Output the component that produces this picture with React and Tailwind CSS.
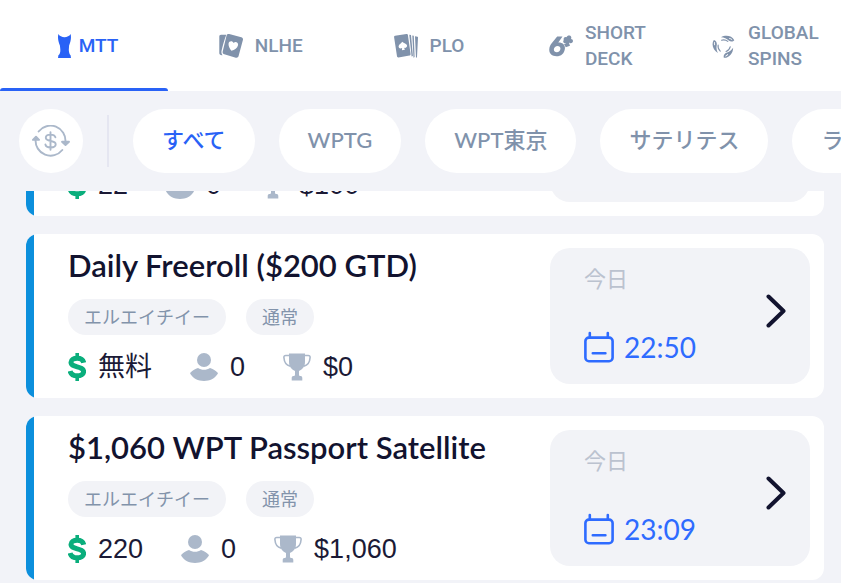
import React, { useLayoutEffect, useRef, useState } from "react";

function CupIcon() {
  return (
    <svg viewBox="0 0 13 24" className="h-6 w-[13px]" fill="currentColor" aria-hidden="true">
      <path d="M.4 0C2.600 4.200 10.400 4.200 12.600 0c1 4-.1 7.600-1.500 11.500L10.800 16c.2 2.600.7 4.400 1.800 5.200L13 24H0l.4-2.800C2 20 2.500 18 2.300 15l-.4-3.500C.4 7.600-.6 4 .4 0Z" />
    </svg>
  );
}

function HeartCardsIcon() {
  return (
    <svg viewBox="0 0 24 24" className="size-6" fill="currentColor" aria-hidden="true">
      <path d="M2 .8 7.300.7C5.300 6 3.500 12 2.500 17c-.3 1.600.1 2.700 1 4.200C1.500 21.500.3 20.500.3 19V2.500C.3 1.500.9.800 2 .800Z" />
      <path
        fillRule="evenodd"
        d="M10.200 0 22.300 3.300c1.300.4 2 1.500 1.600 2.800l-4.300 16c-.4 1.300-1.500 2-2.800 1.600L5.300 20.300c-1.300-.4-1.900-1.400-1.600-2.700L7.500 1.700C7.900.4 8.900-.4 10.200 0Zm2.200 16.800c3.300-.8 6-2.800 6.600-5.600.6-3-2.700-4.400-4.400-2.100-.9-2.700-4.700-2.500-5 .5-.3 2.600 1 4.900 2.800 7.200Z"
      />
    </svg>
  );
}

function SpadeCardsIcon() {
  return (
    <svg viewBox="0 0 24 24" className="size-6" fill="currentColor" aria-hidden="true">
      <path
        fillRule="evenodd"
        d="M1 1.700 12.500 0c.8 0 1.300.3 1.400 1.100L16.600 20c.1.900-.3 1.500-1.100 1.600L4.500 23.400c-.8.1-1.400-.3-1.500-1.100L.1 3.200C0 2.300.3 1.800 1 1.700Zm7.200 6.100c-1 1.700-3.500 2.600-3.600 4.700 0 1.900 2 2.500 3.500 1.500l-.2 2.200 3-.4-.8-2c1.800.4 3.400-.8 2.900-2.500-.5-1.800-3.100-2-4.800-3.500Z"
      />
      <path d="m15.300.8 1.700.3 1.900 21-1.300.4ZM18.300 1.500l1.500.3.800 21.300-1.100.7ZM21 2.200l2.500.6c.4.100.5.400.5.800l-1 19.400-1 .9Z" />
    </svg>
  );
}

function SixPlusIcon() {
  return (
    <svg viewBox="0 0 24 22" className="h-[22px] w-6" fill="currentColor" aria-hidden="true">
      <path
        fillRule="evenodd"
        d="M8.200 1.500h5.300L9.300 7.400c4.200-.2 7 2.300 6.600 6.300-.4 4.500-3.800 7.600-8.400 7.600-4.800 0-7.700-3-7.200-7.400C.7 9.500 4.300 6.500 8.200 1.500Zm.4 9.400c-2 0-3.500 1.300-3.700 3.200-.2 1.900 1 3.100 2.900 3.100 2 0 3.400-1.300 3.600-3.200.2-1.800-.9-3.100-2.800-3.100Z"
      />
      <path d="M14.800 5.100c-.8-2 1-3.600 2.800-2.800.5-2.200 3.900-2.400 4.600-.3.300 1 .1 1.500-.3 2.100 1.900-.1 2.700 2 1.500 3.300-1 1-2.500.9-3.500.1.400 1.400.7 2.300 1.100 3.200l-4.300 1.600c-.5-1.300-1-2.300-1.800-3.200 1.200 0 1.800-.2 2.200-.9-1.900.8-3.900-1.200-2.300-3.100Z" />
    </svg>
  );
}

function SpinsIcon() {
  const arms = [0, 120, 240];
  return (
    <svg viewBox="0 0 24 24" className="size-6" fill="none" aria-hidden="true">
      {arms.map((angle) => (
        <g key={angle} transform={`rotate(${angle} 12 12)`}>
          <path d="M9 3.200C13.500.5 20 1.500 22.300 6.200c-1.300 1.700-4 1.500-5.600.2C14.600 4.500 12.300 3.400 9 3.200Z" fill="currentColor" />
          <path d="M9.500 6.200c2.700-.8 4.600-.2 6.300 1.200" stroke="currentColor" strokeWidth="1.100" strokeLinecap="round" />
          <path d="M17.600 4.500c.9.100 1.600.4 2.300 1" stroke="white" strokeWidth=".9" strokeLinecap="round" />
        </g>
      ))}
    </svg>
  );
}

function CurrencyIcon() {
  return (
    <svg
      viewBox="0 0 38 32"
      className="h-8 w-[38px]"
      fill="none"
      stroke="currentColor"
      strokeWidth="1.900"
      strokeLinecap="round"
      strokeLinejoin="round"
      aria-hidden="true"
    >
      <path d="M6.600 6.500A15 15 0 0 1 33.400 17" />
      <path d="M3.600 14.500A15 15 0 0 0 30.300 25" />
      <path d="M30 16.800h7l-3.500 3.200ZM.9 14.800h6.200L4 11.700Z" fill="currentColor" />
      <path d="M18.500 7.300v17.500M23.400 12.300c-.5-1.800-2.200-2.700-4.900-2.700-2.900 0-4.700 1.100-4.700 3.200 0 4.600 9.900 1.900 9.900 6.500 0 2.100-2 3.200-5 3.200-3.100 0-4.900-1.100-5.300-3" />
    </svg>
  );
}

function DollarIcon() {
  return (
    <svg viewBox="0 0 18 28" className="h-7 w-[18px] text-[#0aae7c]" fill="none" stroke="currentColor" aria-hidden="true">
      <path
        d="M15.700 9.700C15 6.700 12.500 5.300 9.200 5.300c-3.700 0-6.200 1.500-6.200 4 0 5.800 12.600 3.200 12.600 9.200 0 2.700-2.700 4.300-6.400 4.300-3.900 0-6.400-1.600-7.100-4.800"
        strokeWidth="5"
      />
      <path d="M9.200 0v5M9.200 23v5" strokeWidth="3.600" />
    </svg>
  );
}

function PlayerIcon() {
  return (
    <svg viewBox="0 0 28 28" className="size-7 text-[#abb8ca]" fill="currentColor" aria-hidden="true">
      <circle cx="14" cy="7" r="7" />
      <path d="M.5 19.500C2.700 17.200 5.300 15.600 8 14.900c3.300 2.400 8.700 2.400 12 0 2.700.7 5.300 2.300 7.500 4.600.5.600.5 1 .1 1.600C24.700 25.600 20 28 14 28S3.300 25.600.4 21.100c-.4-.6-.4-1 .1-1.600Z" />
    </svg>
  );
}

function TrophyIcon() {
  return (
    <svg viewBox="0 0 28 28" className="size-7 text-[#abb8ca]" fill="currentColor" aria-hidden="true">
      <path d="M6 .5h16v8.300c0 4.900-2.300 7.500-6 9.200v3.500c0 1 .6 1.500 1.600 1.600 1.100.1 1.700.8 1.700 1.900v2.500H8.700V25c0-1.100.6-1.800 1.700-1.900 1-.1 1.600-.6 1.600-1.600V18c-3.700-1.700-6-4.300-6-9.200Z" />
      <path
        d="M6 2.500H2.800C1.500 2.500.8 3.200.9 4.500c.3 4.700 2.200 7.800 6.300 8.600M22 2.500h3.200c1.300 0 2 .7 1.900 2-.3 4.700-2.200 7.800-6.300 8.600"
        fill="none"
        stroke="currentColor"
        strokeWidth="1.600"
      />
    </svg>
  );
}

function CalendarIcon() {
  return (
    <svg
      viewBox="0 0 30 32"
      className="h-8 w-[30px]"
      fill="none"
      stroke="currentColor"
      strokeWidth="2.600"
      strokeLinecap="round"
      aria-hidden="true"
    >
      <rect x="1.400" y="6.600" width="27.200" height="23.600" rx="3.500" />
      <path d="M5.800 6V2M23.800 6V2M8.800 22.200h12.600" />
    </svg>
  );
}

function ChevronIcon() {
  return (
    <svg
      viewBox="0 0 20 34"
      className="h-[34px] w-5 text-[#12132f]"
      fill="none"
      stroke="currentColor"
      strokeWidth="4"
      strokeLinecap="round"
      strokeLinejoin="round"
      aria-hidden="true"
    >
      <path d="m2.500 2.500 15 14.500-15 14.500" />
    </svg>
  );
}

const tabs = [
  { id: "mtt", label: "MTT", icon: CupIcon },
  { id: "nlhe", label: "NLHE", icon: HeartCardsIcon },
  { id: "plo", label: "PLO", icon: SpadeCardsIcon },
  { id: "short", label: "SHORT DECK", icon: SixPlusIcon },
  { id: "spins", label: "GLOBAL SPINS", icon: SpinsIcon },
];

const filters = ["すべて", "WPTG", "WPT東京", "サテリテス", "ラ"];

const tournaments = [
  { id: 1, fee: "22", players: 0, prize: "$100" },
  {
    id: 2,
    title: "Daily Freeroll ($200 GTD)",
    tags: ["エルエイチイー", "通常"],
    fee: "無料",
    players: 0,
    prize: "$0",
    day: "今日",
    time: "22:50",
  },
  {
    id: 3,
    title: "$1,060 WPT Passport Satellite",
    tags: ["エルエイチイー", "通常"],
    fee: "220",
    players: 0,
    prize: "$1,060",
    day: "今日",
    time: "23:09",
  },
];

function Stat({ icon: Icon, children }) {
  return (
    <span className="flex items-center gap-3">
      <Icon />
      {children}
    </span>
  );
}

function TournamentCard({ title, tags, fee, players, prize, day, time }) {
  return (
    <article className="flex min-h-[164px] shrink-0 overflow-hidden rounded-xl bg-white">
      <div className="w-2 shrink-0 bg-[#0c8fdc]" />

      <div className="flex min-w-0 flex-1 flex-col justify-end gap-3 pt-3 pb-[11px] pl-[34px]">
        {title && (
          <h2 className="mb-1 text-[31px] leading-9 font-semibold whitespace-nowrap text-[#12132f]">{title}</h2>
        )}
        {tags && (
          <div className="flex gap-5">
            {tags.map((tag) => (
              <span
                key={tag}
                className="flex h-9 items-center rounded-full bg-[#f2f3f7] px-4 text-lg text-[#8293ab]"
              >
                {tag}
              </span>
            ))}
          </div>
        )}
        <div className="flex h-10 items-center gap-[38px] font-['Liberation_Sans','Noto_Sans_CJK_JP',sans-serif] text-[27px] leading-10 text-[#1b1a36]">
          <Stat icon={DollarIcon}>{fee}</Stat>
          <Stat icon={PlayerIcon}>{players}</Stat>
          <Stat icon={TrophyIcon}>{prize}</Stat>
        </div>
      </div>

      <div className="my-3.5 mr-3.5 flex w-[260px] shrink-0 items-center justify-between rounded-[20px] bg-[#f2f3f7] pr-6 pb-2.5 pl-[34px]">
        {time && (
          <>
            <div className="flex flex-col gap-9 pt-1">
              <span className="text-[22px] leading-8 text-[#bbc2cf]">{day}</span>
              <span className="flex items-center gap-2.5 text-[28px] leading-8 text-[#2e6bff]">
                <CalendarIcon />
                {time}
              </span>
            </div>
            <button type="button" aria-label={title}>
              <ChevronIcon />
            </button>
          </>
        )}
      </div>
    </article>
  );
}

export default function App() {
  const [activeTab, setActiveTab] = useState("mtt");
  const [activeFilter, setActiveFilter] = useState("すべて");
  const listRef = useRef(null);

  useLayoutEffect(() => {
    listRef.current.scrollTop = 139;
  }, []);

  return (
    <div className="flex h-screen flex-col overflow-hidden bg-[#f2f3f8] font-['Lato','Noto_Sans_CJK_JP',sans-serif]">
      {/* Game tabs */}
      <nav className="grid shrink-0 grid-cols-5 bg-white font-['Roboto',sans-serif]">
        {tabs.map(({ id, label, icon: Icon }) => {
          const isActive = id === activeTab;
          return (
            <button
              key={id}
              type="button"
              onClick={() => setActiveTab(id)}
              className={`flex h-[91px] flex-col text-[19px] leading-[26px] font-medium ${
                isActive ? "text-[#2962f6]" : "text-[#8092ab]"
              }`}
            >
              <span
                className={`flex w-full flex-1 items-center justify-center pt-[3px] text-left ${
                  isActive ? "gap-2 pl-2" : "gap-3 pl-[17px]"
                }`}
              >
                <Icon />
                <span className={label.includes(" ") ? "w-min" : ""}>{label}</span>
              </span>
              <span className={`h-[3px] w-full shrink-0 rounded-t ${isActive ? "bg-[#2962f6]" : ""}`} />
            </button>
          );
        })}
      </nav>

      {/* Filters */}
      <div className="flex h-[100px] shrink-0 items-center gap-6 overflow-hidden pl-[19px]">
        <button
          type="button"
          aria-label="$"
          className="flex size-16 shrink-0 items-center justify-center rounded-full bg-white text-[#abb8ca]"
        >
          <CurrencyIcon />
        </button>
        <div className="h-13 w-0.5 shrink-0 bg-[#e5e6f1]" />
        {filters.map((filter) => (
          <button
            key={filter}
            type="button"
            onClick={() => setActiveFilter(filter)}
            className={`h-16 shrink-0 rounded-full bg-white px-[29px] pb-1 text-[22px] font-medium ${
              filter === activeFilter ? "text-[#2962f6]" : "text-[#8092ab]"
            }`}
          >
            {filter}
          </button>
        ))}
      </div>

      {/* Tournament list */}
      <main
        ref={listRef}
        className="flex min-h-0 flex-1 flex-col gap-[18px] overflow-y-auto pr-[17px] pb-4 pl-[26px] [scrollbar-width:none]"
      >
        {tournaments.map((item) => (
          <TournamentCard key={item.id} {...item} />
        ))}
      </main>
    </div>
  );
}
